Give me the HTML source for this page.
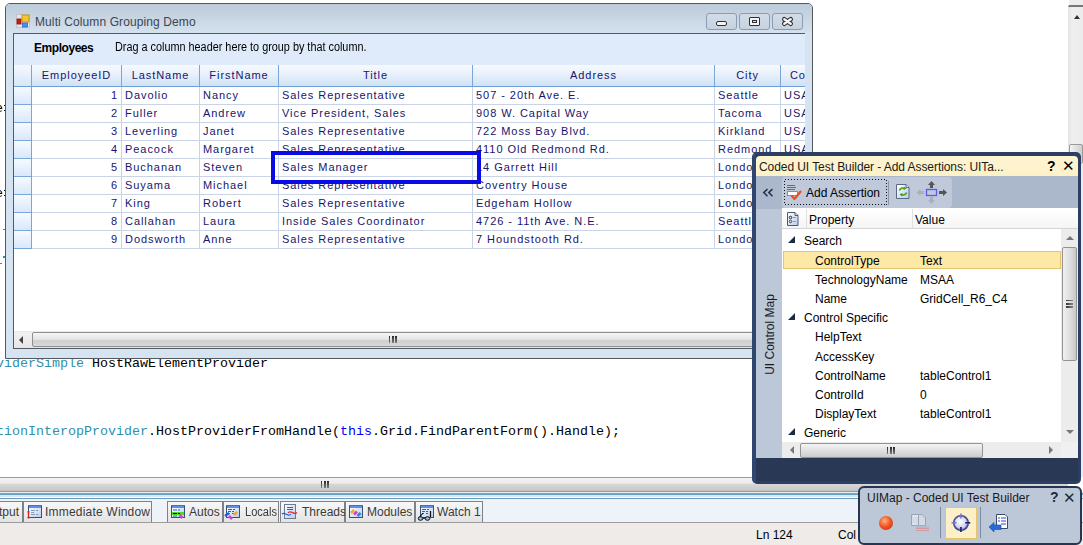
<!DOCTYPE html>
<html><head><meta charset="utf-8">
<style>
*{box-sizing:border-box;margin:0;padding:0}
html,body{width:1083px;height:545px;overflow:hidden;background:#fff;position:relative;font-family:"Liberation Sans",sans-serif}
div,span.a{position:absolute}
.code{font-family:"Liberation Mono",monospace;font-size:13.33px;line-height:17px;white-space:pre;color:#000}
.tl{color:#2b91af;position:static}
.kw{color:#0000ff;position:static}
.gt{font-size:11px;letter-spacing:0.95px;color:#16166e;white-space:nowrap;line-height:17px}
.t12{font-size:12px;white-space:nowrap;line-height:15px}
</style></head>
<body>

<svg width="0" height="0" style="position:absolute"><defs><linearGradient id="wbody" x1="0" y1="0" x2="1" y2="1"><stop offset="0" stop-color="#ffffff"/><stop offset="1" stop-color="#b8cdf0"/></linearGradient><radialGradient id="xh" cx="0.45" cy="0.4" r="0.6"><stop offset="0" stop-color="#ffffff"/><stop offset="1" stop-color="#c0c8ec"/></radialGradient></defs></svg>
<div class="code" style="left:-5px;top:100px">e</div>
<div class="code" style="left:-5px;top:185px">e</div>
<div class="code" style="left:-4px;top:355px"><span class="tl">viderSimple</span> HostRawElementProvider</div>
<div class="code" style="left:-4px;top:423px"><span class="tl">tionInteropProvider</span>.HostProviderFromHandle(<span class="kw">this</span>.Grid.FindParentForm().Handle);</div>
<div style="left:3px;top:229px;width:2px;height:1px;background:#2b91af"></div>
<div style="left:3px;top:256px;width:2px;height:2px;background:#2b91af"></div>
<div style="left:0;top:263px;width:2px;height:1px;background:#2b91af"></div>
<div style="left:4px;top:105px;width:1px;height:1px;background:#000"></div>
<div style="left:4px;top:110px;width:1px;height:1px;background:#000"></div>
<div style="left:4px;top:190px;width:1px;height:1px;background:#000"></div>
<div style="left:4px;top:195px;width:1px;height:1px;background:#000"></div>
<div style="left:1068px;top:0;width:15px;height:477px;background:linear-gradient(90deg,#e3e3e3,#efefef 30%,#ececec)"></div>
<div style="left:1068px;top:0;width:15px;height:7px;background:#eeeeee;border-left:1px solid #fff;border-bottom:2px solid #777"></div>
<div style="left:1074px;top:15px;width:0;height:0;border-left:3.5px solid transparent;border-right:3.5px solid transparent;border-bottom:4px solid #333"></div>
<div style="left:1069px;top:144px;width:14px;height:20px;border:1px solid #9a9a9a;border-radius:2px;background:linear-gradient(90deg,#f4f4f4,#e0e0e0 50%,#cfcfcf)"></div>
<div style="left:5px;top:3px;width:808px;height:356px;border:1px solid #55595e;border-radius:5px 5px 0 0;background:#d6e3f0"></div>
<div style="left:6px;top:4px;width:806px;height:29px;border-radius:4px 4px 0 0;background:linear-gradient(#bccbda,#d5e1ed)"></div>
<svg style="position:absolute;left:14px;top:12px" width="18" height="18" viewBox="14 12 18 18"><rect x="16.5" y="14.5" width="13" height="13" fill="#dde5ee" stroke="#c4c4c4" stroke-width="1"/><rect x="17" y="19" width="4" height="5" fill="#c81e18" stroke="#8a1010" stroke-width="0.8"/><rect x="22" y="15" width="7" height="7" fill="#f6c430" stroke="#c08a00" stroke-width="0.8"/><rect x="22.5" y="23" width="5" height="4" fill="#4a8ef0" stroke="#3068c8" stroke-width="0.8"/></svg>
<div class="t12" style="left:35px;top:15px;color:#3c4650;letter-spacing:0.1px">Multi Column Grouping Demo</div>
<div style="left:706px;top:13px;width:31px;height:17px;border:1px solid #8c9cb4;border-radius:3px;background:linear-gradient(#d2dce8,#c6d2df)"></div>
<div style="left:739px;top:13px;width:31px;height:17px;border:1px solid #8c9cb4;border-radius:3px;background:linear-gradient(#d2dce8,#c6d2df)"></div>
<div style="left:772px;top:13px;width:31px;height:17px;border:1px solid #8c9cb4;border-radius:3px;background:linear-gradient(#d2dce8,#c6d2df)"></div>
<div style="left:716px;top:21px;width:11px;height:5px;border:1px solid #2e2e36;border-radius:2px;background:#f4f4f4"></div>
<div style="left:749px;top:17px;width:11px;height:9px;border:1px solid #2e2e36;border-radius:1px;background:#f4f4f4"></div><div style="left:752px;top:20px;width:5px;height:3px;border:1px solid #2e2e36;background:#d0dceb"></div>
<svg style="position:absolute;left:780px;top:15px" width="15" height="13" viewBox="0 0 15 13"><path d="M4.3 4.3 L10.7 8.7 M10.7 4.3 L4.3 8.7" stroke="#2e3038" stroke-width="4.6" stroke-linecap="round"/><path d="M4.3 4.3 L10.7 8.7 M10.7 4.3 L4.3 8.7" stroke="#f6f6f6" stroke-width="2.4" stroke-linecap="round"/></svg>
<div style="left:13px;top:33px;width:792px;height:316px;border:1px solid #555a60;border-right:none;background:#dfebfb;overflow:hidden">
<div style="left:20px;top:8px;font-size:12px;font-weight:bold;color:#000;white-space:nowrap;line-height:13px;letter-spacing:-0.45px">Employees</div>
<div style="left:101px;top:7px;font-size:12px;color:#000;white-space:nowrap;line-height:13px;transform:scaleX(0.904);transform-origin:0 0">Drag a column header here to group by that column.</div>
<div style="left:0;top:53px;width:800px;height:244px;background:#fff"></div>
<div style="left:0;top:31px;width:18px;height:22px;background:linear-gradient(#f5f9fe,#d7e6f8);border-right:1px solid #7ba6d9;border-bottom:1px solid #6f9fd8"></div>
<div class="gt" style="left:18px;top:31px;width:90px;height:22px;background:linear-gradient(#f6fafe,#e8f0fb 45%,#d0e2f6);border-right:1px solid #7ba6d9;border-bottom:1px solid #6f9fd8;text-align:center;line-height:20px">EmployeeID</div>
<div class="gt" style="left:108px;top:31px;width:78px;height:22px;background:linear-gradient(#f6fafe,#e8f0fb 45%,#d0e2f6);border-right:1px solid #7ba6d9;border-bottom:1px solid #6f9fd8;text-align:center;line-height:20px">LastName</div>
<div class="gt" style="left:186px;top:31px;width:79px;height:22px;background:linear-gradient(#f6fafe,#e8f0fb 45%,#d0e2f6);border-right:1px solid #7ba6d9;border-bottom:1px solid #6f9fd8;text-align:center;line-height:20px">FirstName</div>
<div class="gt" style="left:265px;top:31px;width:194px;height:22px;background:linear-gradient(#f6fafe,#e8f0fb 45%,#d0e2f6);border-right:1px solid #7ba6d9;border-bottom:1px solid #6f9fd8;text-align:center;line-height:20px">Title</div>
<div class="gt" style="left:459px;top:31px;width:242px;height:22px;background:linear-gradient(#f6fafe,#e8f0fb 45%,#d0e2f6);border-right:1px solid #7ba6d9;border-bottom:1px solid #6f9fd8;text-align:center;line-height:20px">Address</div>
<div class="gt" style="left:701px;top:31px;width:66px;height:22px;background:linear-gradient(#f6fafe,#e8f0fb 45%,#d0e2f6);border-right:1px solid #7ba6d9;border-bottom:1px solid #6f9fd8;text-align:center;line-height:20px">City</div>
<div class="gt" style="left:767px;top:31px;width:64px;height:22px;background:linear-gradient(#f6fafe,#e8f0fb 45%,#d0e2f6);border-right:1px solid #7ba6d9;border-bottom:1px solid #6f9fd8;text-align:center;line-height:20px">Country</div>
<div style="left:0;top:53px;width:18px;height:18px;background:linear-gradient(#f6faff,#d9e8fa);border-right:1px solid #7ba6d9;border-bottom:1px solid #7ba6d9"></div>
<div class="gt" style="left:18px;top:53px;width:90px;height:18px;border-right:1px solid #c9d5e7;border-bottom:1px solid #c9d5e7;overflow:hidden;text-align:right;padding-right:3px">1</div>
<div class="gt" style="left:108px;top:53px;width:78px;height:18px;border-right:1px solid #c9d5e7;border-bottom:1px solid #c9d5e7;overflow:hidden;padding-left:3px">Davolio</div>
<div class="gt" style="left:186px;top:53px;width:79px;height:18px;border-right:1px solid #c9d5e7;border-bottom:1px solid #c9d5e7;overflow:hidden;padding-left:3px">Nancy</div>
<div class="gt" style="left:265px;top:53px;width:194px;height:18px;border-right:1px solid #c9d5e7;border-bottom:1px solid #c9d5e7;overflow:hidden;padding-left:3px">Sales Representative</div>
<div class="gt" style="left:459px;top:53px;width:242px;height:18px;border-right:1px solid #c9d5e7;border-bottom:1px solid #c9d5e7;overflow:hidden;padding-left:3px">507 - 20th Ave. E.</div>
<div class="gt" style="left:701px;top:53px;width:66px;height:18px;border-right:1px solid #c9d5e7;border-bottom:1px solid #c9d5e7;overflow:hidden;padding-left:3px">Seattle</div>
<div class="gt" style="left:767px;top:53px;width:64px;height:18px;border-right:1px solid #c9d5e7;border-bottom:1px solid #c9d5e7;overflow:hidden;padding-left:3px">USA</div>
<div style="left:0;top:71px;width:18px;height:18px;background:linear-gradient(#f6faff,#d9e8fa);border-right:1px solid #7ba6d9;border-bottom:1px solid #7ba6d9"></div>
<div class="gt" style="left:18px;top:71px;width:90px;height:18px;border-right:1px solid #c9d5e7;border-bottom:1px solid #c9d5e7;overflow:hidden;text-align:right;padding-right:3px">2</div>
<div class="gt" style="left:108px;top:71px;width:78px;height:18px;border-right:1px solid #c9d5e7;border-bottom:1px solid #c9d5e7;overflow:hidden;padding-left:3px">Fuller</div>
<div class="gt" style="left:186px;top:71px;width:79px;height:18px;border-right:1px solid #c9d5e7;border-bottom:1px solid #c9d5e7;overflow:hidden;padding-left:3px">Andrew</div>
<div class="gt" style="left:265px;top:71px;width:194px;height:18px;border-right:1px solid #c9d5e7;border-bottom:1px solid #c9d5e7;overflow:hidden;padding-left:3px">Vice President, Sales</div>
<div class="gt" style="left:459px;top:71px;width:242px;height:18px;border-right:1px solid #c9d5e7;border-bottom:1px solid #c9d5e7;overflow:hidden;padding-left:3px">908 W. Capital Way</div>
<div class="gt" style="left:701px;top:71px;width:66px;height:18px;border-right:1px solid #c9d5e7;border-bottom:1px solid #c9d5e7;overflow:hidden;padding-left:3px">Tacoma</div>
<div class="gt" style="left:767px;top:71px;width:64px;height:18px;border-right:1px solid #c9d5e7;border-bottom:1px solid #c9d5e7;overflow:hidden;padding-left:3px">USA</div>
<div style="left:0;top:89px;width:18px;height:18px;background:linear-gradient(#f6faff,#d9e8fa);border-right:1px solid #7ba6d9;border-bottom:1px solid #7ba6d9"></div>
<div class="gt" style="left:18px;top:89px;width:90px;height:18px;border-right:1px solid #c9d5e7;border-bottom:1px solid #c9d5e7;overflow:hidden;text-align:right;padding-right:3px">3</div>
<div class="gt" style="left:108px;top:89px;width:78px;height:18px;border-right:1px solid #c9d5e7;border-bottom:1px solid #c9d5e7;overflow:hidden;padding-left:3px">Leverling</div>
<div class="gt" style="left:186px;top:89px;width:79px;height:18px;border-right:1px solid #c9d5e7;border-bottom:1px solid #c9d5e7;overflow:hidden;padding-left:3px">Janet</div>
<div class="gt" style="left:265px;top:89px;width:194px;height:18px;border-right:1px solid #c9d5e7;border-bottom:1px solid #c9d5e7;overflow:hidden;padding-left:3px">Sales Representative</div>
<div class="gt" style="left:459px;top:89px;width:242px;height:18px;border-right:1px solid #c9d5e7;border-bottom:1px solid #c9d5e7;overflow:hidden;padding-left:3px">722 Moss Bay Blvd.</div>
<div class="gt" style="left:701px;top:89px;width:66px;height:18px;border-right:1px solid #c9d5e7;border-bottom:1px solid #c9d5e7;overflow:hidden;padding-left:3px">Kirkland</div>
<div class="gt" style="left:767px;top:89px;width:64px;height:18px;border-right:1px solid #c9d5e7;border-bottom:1px solid #c9d5e7;overflow:hidden;padding-left:3px">USA</div>
<div style="left:0;top:107px;width:18px;height:18px;background:linear-gradient(#f6faff,#d9e8fa);border-right:1px solid #7ba6d9;border-bottom:1px solid #7ba6d9"></div>
<div class="gt" style="left:18px;top:107px;width:90px;height:18px;border-right:1px solid #c9d5e7;border-bottom:1px solid #c9d5e7;overflow:hidden;text-align:right;padding-right:3px">4</div>
<div class="gt" style="left:108px;top:107px;width:78px;height:18px;border-right:1px solid #c9d5e7;border-bottom:1px solid #c9d5e7;overflow:hidden;padding-left:3px">Peacock</div>
<div class="gt" style="left:186px;top:107px;width:79px;height:18px;border-right:1px solid #c9d5e7;border-bottom:1px solid #c9d5e7;overflow:hidden;padding-left:3px">Margaret</div>
<div class="gt" style="left:265px;top:107px;width:194px;height:18px;border-right:1px solid #c9d5e7;border-bottom:1px solid #c9d5e7;overflow:hidden;padding-left:3px">Sales Representative</div>
<div class="gt" style="left:459px;top:107px;width:242px;height:18px;border-right:1px solid #c9d5e7;border-bottom:1px solid #c9d5e7;overflow:hidden;padding-left:3px">4110 Old Redmond Rd.</div>
<div class="gt" style="left:701px;top:107px;width:66px;height:18px;border-right:1px solid #c9d5e7;border-bottom:1px solid #c9d5e7;overflow:hidden;padding-left:3px">Redmond</div>
<div class="gt" style="left:767px;top:107px;width:64px;height:18px;border-right:1px solid #c9d5e7;border-bottom:1px solid #c9d5e7;overflow:hidden;padding-left:3px">USA</div>
<div style="left:0;top:125px;width:18px;height:18px;background:linear-gradient(#f6faff,#d9e8fa);border-right:1px solid #7ba6d9;border-bottom:1px solid #7ba6d9"></div>
<div class="gt" style="left:18px;top:125px;width:90px;height:18px;border-right:1px solid #c9d5e7;border-bottom:1px solid #c9d5e7;overflow:hidden;text-align:right;padding-right:3px">5</div>
<div class="gt" style="left:108px;top:125px;width:78px;height:18px;border-right:1px solid #c9d5e7;border-bottom:1px solid #c9d5e7;overflow:hidden;padding-left:3px">Buchanan</div>
<div class="gt" style="left:186px;top:125px;width:79px;height:18px;border-right:1px solid #c9d5e7;border-bottom:1px solid #c9d5e7;overflow:hidden;padding-left:3px">Steven</div>
<div class="gt" style="left:265px;top:125px;width:194px;height:18px;border-right:1px solid #c9d5e7;border-bottom:1px solid #c9d5e7;overflow:hidden;padding-left:3px">Sales Manager</div>
<div class="gt" style="left:459px;top:125px;width:242px;height:18px;border-right:1px solid #c9d5e7;border-bottom:1px solid #c9d5e7;overflow:hidden;padding-left:3px">14 Garrett Hill</div>
<div class="gt" style="left:701px;top:125px;width:66px;height:18px;border-right:1px solid #c9d5e7;border-bottom:1px solid #c9d5e7;overflow:hidden;padding-left:3px">London</div>
<div class="gt" style="left:767px;top:125px;width:64px;height:18px;border-right:1px solid #c9d5e7;border-bottom:1px solid #c9d5e7;overflow:hidden;padding-left:3px">UK</div>
<div style="left:0;top:143px;width:18px;height:18px;background:linear-gradient(#f6faff,#d9e8fa);border-right:1px solid #7ba6d9;border-bottom:1px solid #7ba6d9"></div>
<div class="gt" style="left:18px;top:143px;width:90px;height:18px;border-right:1px solid #c9d5e7;border-bottom:1px solid #c9d5e7;overflow:hidden;text-align:right;padding-right:3px">6</div>
<div class="gt" style="left:108px;top:143px;width:78px;height:18px;border-right:1px solid #c9d5e7;border-bottom:1px solid #c9d5e7;overflow:hidden;padding-left:3px">Suyama</div>
<div class="gt" style="left:186px;top:143px;width:79px;height:18px;border-right:1px solid #c9d5e7;border-bottom:1px solid #c9d5e7;overflow:hidden;padding-left:3px">Michael</div>
<div class="gt" style="left:265px;top:143px;width:194px;height:18px;border-right:1px solid #c9d5e7;border-bottom:1px solid #c9d5e7;overflow:hidden;padding-left:3px">Sales Representative</div>
<div class="gt" style="left:459px;top:143px;width:242px;height:18px;border-right:1px solid #c9d5e7;border-bottom:1px solid #c9d5e7;overflow:hidden;padding-left:3px">Coventry House</div>
<div class="gt" style="left:701px;top:143px;width:66px;height:18px;border-right:1px solid #c9d5e7;border-bottom:1px solid #c9d5e7;overflow:hidden;padding-left:3px">London</div>
<div class="gt" style="left:767px;top:143px;width:64px;height:18px;border-right:1px solid #c9d5e7;border-bottom:1px solid #c9d5e7;overflow:hidden;padding-left:3px">UK</div>
<div style="left:0;top:161px;width:18px;height:18px;background:linear-gradient(#f6faff,#d9e8fa);border-right:1px solid #7ba6d9;border-bottom:1px solid #7ba6d9"></div>
<div class="gt" style="left:18px;top:161px;width:90px;height:18px;border-right:1px solid #c9d5e7;border-bottom:1px solid #c9d5e7;overflow:hidden;text-align:right;padding-right:3px">7</div>
<div class="gt" style="left:108px;top:161px;width:78px;height:18px;border-right:1px solid #c9d5e7;border-bottom:1px solid #c9d5e7;overflow:hidden;padding-left:3px">King</div>
<div class="gt" style="left:186px;top:161px;width:79px;height:18px;border-right:1px solid #c9d5e7;border-bottom:1px solid #c9d5e7;overflow:hidden;padding-left:3px">Robert</div>
<div class="gt" style="left:265px;top:161px;width:194px;height:18px;border-right:1px solid #c9d5e7;border-bottom:1px solid #c9d5e7;overflow:hidden;padding-left:3px">Sales Representative</div>
<div class="gt" style="left:459px;top:161px;width:242px;height:18px;border-right:1px solid #c9d5e7;border-bottom:1px solid #c9d5e7;overflow:hidden;padding-left:3px">Edgeham Hollow</div>
<div class="gt" style="left:701px;top:161px;width:66px;height:18px;border-right:1px solid #c9d5e7;border-bottom:1px solid #c9d5e7;overflow:hidden;padding-left:3px">London</div>
<div class="gt" style="left:767px;top:161px;width:64px;height:18px;border-right:1px solid #c9d5e7;border-bottom:1px solid #c9d5e7;overflow:hidden;padding-left:3px">UK</div>
<div style="left:0;top:179px;width:18px;height:18px;background:linear-gradient(#f6faff,#d9e8fa);border-right:1px solid #7ba6d9;border-bottom:1px solid #7ba6d9"></div>
<div class="gt" style="left:18px;top:179px;width:90px;height:18px;border-right:1px solid #c9d5e7;border-bottom:1px solid #c9d5e7;overflow:hidden;text-align:right;padding-right:3px">8</div>
<div class="gt" style="left:108px;top:179px;width:78px;height:18px;border-right:1px solid #c9d5e7;border-bottom:1px solid #c9d5e7;overflow:hidden;padding-left:3px">Callahan</div>
<div class="gt" style="left:186px;top:179px;width:79px;height:18px;border-right:1px solid #c9d5e7;border-bottom:1px solid #c9d5e7;overflow:hidden;padding-left:3px">Laura</div>
<div class="gt" style="left:265px;top:179px;width:194px;height:18px;border-right:1px solid #c9d5e7;border-bottom:1px solid #c9d5e7;overflow:hidden;padding-left:3px">Inside Sales Coordinator</div>
<div class="gt" style="left:459px;top:179px;width:242px;height:18px;border-right:1px solid #c9d5e7;border-bottom:1px solid #c9d5e7;overflow:hidden;padding-left:3px">4726 - 11th Ave. N.E.</div>
<div class="gt" style="left:701px;top:179px;width:66px;height:18px;border-right:1px solid #c9d5e7;border-bottom:1px solid #c9d5e7;overflow:hidden;padding-left:3px">Seattle</div>
<div class="gt" style="left:767px;top:179px;width:64px;height:18px;border-right:1px solid #c9d5e7;border-bottom:1px solid #c9d5e7;overflow:hidden;padding-left:3px">USA</div>
<div style="left:0;top:197px;width:18px;height:18px;background:linear-gradient(#f6faff,#d9e8fa);border-right:1px solid #7ba6d9;border-bottom:1px solid #7ba6d9"></div>
<div class="gt" style="left:18px;top:197px;width:90px;height:18px;border-right:1px solid #c9d5e7;border-bottom:1px solid #c9d5e7;overflow:hidden;text-align:right;padding-right:3px">9</div>
<div class="gt" style="left:108px;top:197px;width:78px;height:18px;border-right:1px solid #c9d5e7;border-bottom:1px solid #c9d5e7;overflow:hidden;padding-left:3px">Dodsworth</div>
<div class="gt" style="left:186px;top:197px;width:79px;height:18px;border-right:1px solid #c9d5e7;border-bottom:1px solid #c9d5e7;overflow:hidden;padding-left:3px">Anne</div>
<div class="gt" style="left:265px;top:197px;width:194px;height:18px;border-right:1px solid #c9d5e7;border-bottom:1px solid #c9d5e7;overflow:hidden;padding-left:3px">Sales Representative</div>
<div class="gt" style="left:459px;top:197px;width:242px;height:18px;border-right:1px solid #c9d5e7;border-bottom:1px solid #c9d5e7;overflow:hidden;padding-left:3px">7 Houndstooth Rd.</div>
<div class="gt" style="left:701px;top:197px;width:66px;height:18px;border-right:1px solid #c9d5e7;border-bottom:1px solid #c9d5e7;overflow:hidden;padding-left:3px">London</div>
<div class="gt" style="left:767px;top:197px;width:64px;height:18px;border-right:1px solid #c9d5e7;border-bottom:1px solid #c9d5e7;overflow:hidden;padding-left:3px">UK</div>
<div style="left:0;top:298px;width:800px;height:16px;background:linear-gradient(#f2f2f2,#e6e6e6)"></div>
<div style="left:5px;top:302px;width:0;height:0;border-top:4px solid transparent;border-bottom:4px solid transparent;border-right:4px solid #444"></div>
<div style="left:18px;top:298px;width:760px;height:15px;border:1px solid #8e8f8f;border-radius:2px;background:linear-gradient(#f6f6f6,#e4e4e4 50%,#cfcfcf 55%,#d8d8d8)"></div>
<div style="left:375px;top:302px;width:8px;height:7px;background:repeating-linear-gradient(90deg,#222 0 1.5px,transparent 1.5px 3.1px);-webkit-mask-image:linear-gradient(#000,rgba(0,0,0,0.45))"></div>
</div>
<div style="left:271px;top:151px;width:210px;height:33px;border:4px solid #0a0ae6"></div>
<div style="left:0;top:477px;width:1068px;height:15px;border-top:1px solid #9a9a9a;border-bottom:1px solid #9a9a9a;background:linear-gradient(#f3f3f3,#ececec 40%,#d6d6d6 50%,#cacaca 90%,#c0c0c0)"></div>
<div style="left:321px;top:481px;width:8px;height:7px;background:repeating-linear-gradient(90deg,#222 0 1.5px,transparent 1.5px 3.1px);-webkit-mask-image:linear-gradient(#000,rgba(0,0,0,0.45))"></div>
<div style="left:0;top:492px;width:1083px;height:1px;background:#ececec"></div>
<div style="left:0;top:493px;width:1083px;height:1px;background:#a09a94"></div>
<div style="left:0;top:494px;width:1083px;height:1px;background:#6aa0c0"></div>
<div style="left:0;top:495px;width:1083px;height:2px;background:#d8e8f8"></div>
<div style="left:0;top:497px;width:1083px;height:1px;background:#ffffff"></div>
<div style="left:0;top:498px;width:1083px;height:1px;background:#6a9cc0"></div>
<div style="left:0;top:499px;width:1083px;height:23px;background:#eef3fa"></div>
<div style="left:-40px;top:501px;width:63px;height:22px;border:1px solid #7e8288;border-bottom:none;background:linear-gradient(#f8f8f8,#ebebeb 60%,#e2e2e2)"></div>
<div class="t12" style="left:-1px;top:505px;color:#3a3a3a">tput</div>
<div style="left:23px;top:501px;width:129px;height:22px;border:1px solid #7e8288;border-bottom:none;background:linear-gradient(#f8f8f8,#ebebeb 60%,#e2e2e2)"></div>
<svg style="position:absolute;left:24px;top:503px" width="22" height="18" viewBox="24 503 22 18"><rect x="28.5" y="505.5" width="13" height="12" fill="url(#wbody)" stroke="#34527a" stroke-width="1"/><rect x="29" y="506" width="12" height="2" fill="#5c8fe6"/><rect x="28" y="505" width="14" height="1" fill="#3f6fd0"/><path d="M31 510.5h4 M36 510.5h2 M31 512.5h3 M31 514.5h4 M36 514.5h2" stroke="#8a9ab0" stroke-width="1"/><path d="M27.5 511 L29.5 511 L29 516 L28 516Z" fill="#e02010"/><rect x="27.5" y="516.5" width="2" height="2" fill="#e02010"/></svg>
<div class="t12" style="left:45px;top:505px;color:#3a3a3a;letter-spacing:0.2px;">Immediate Window</div>
<div style="left:167px;top:501px;width:56px;height:22px;border:1px solid #7e8288;border-bottom:none;background:linear-gradient(#f8f8f8,#ebebeb 60%,#e2e2e2)"></div>
<svg style="position:absolute;left:169px;top:503px" width="20" height="18" viewBox="169 503 20 18"><rect x="171.5" y="505.5" width="13" height="12" fill="url(#wbody)" stroke="#34527a" stroke-width="1"/><rect x="172" y="506" width="12" height="2" fill="#5c8fe6"/><rect x="171" y="505" width="14" height="1" fill="#3f6fd0"/><rect x="172" y="512" width="12" height="3" fill="#4ee01a"/><path d="M173 510h4 M178 510h2 M173 513.5h4 M178 513.5h2 M173 516h4" stroke="#2a5ad8" stroke-width="1"/><path d="M173 513.5h4 M178 513.5h2" stroke="#000" stroke-width="1.2"/><path d="M179.5 515 L182.5 518" stroke="#d040d0" stroke-width="2.6"/></svg>
<div class="t12" style="left:189px;top:505px;color:#3a3a3a;">Autos</div>
<div style="left:223px;top:501px;width:56px;height:22px;border:1px solid #7e8288;border-bottom:none;background:linear-gradient(#f8f8f8,#ebebeb 60%,#e2e2e2)"></div>
<svg style="position:absolute;left:223px;top:503px" width="20" height="20" viewBox="223 503 20 20"><rect x="226.5" y="505.5" width="13" height="12" fill="url(#wbody)" stroke="#34527a" stroke-width="1"/><rect x="227" y="506" width="12" height="2" fill="#5c8fe6"/><rect x="226" y="505" width="14" height="1" fill="#3f6fd0"/><path d="M228 509.5h4 M233 509.5h2 M228 511.5h3 M232 511.5h2 M229 513.5h1 M232 513.5h2" stroke="#2a5ad8" stroke-width="1"/><path d="M225 516 L229 513" stroke="#2060d0" stroke-width="2.6"/><path d="M234 515 L237 512" stroke="#e8b020" stroke-width="2.6"/><path d="M229 516 L232 519" stroke="#d040d0" stroke-width="2.6"/></svg>
<div class="t12" style="left:245px;top:505px;color:#3a3a3a;transform:scaleX(0.92);transform-origin:0 0;">Locals</div>
<div style="left:280px;top:501px;width:65px;height:22px;border:1px solid #7e8288;border-bottom:none;background:linear-gradient(#f8f8f8,#ebebeb 60%,#e2e2e2)"></div>
<svg style="position:absolute;left:281px;top:503px" width="18" height="18" viewBox="281 503 18 18"><rect x="284.5" y="504.5" width="11" height="14" fill="url(#wbody)" stroke="#6a7c94" stroke-width="1"/><path d="M287 507.5h6 M287 509.5h6" stroke="#2a5ad8" stroke-width="1"/><path d="M282 514 C285 511 288 518 291 514" stroke="#2a5ad8" stroke-width="1.2" fill="none"/><path d="M288 513 C291 509 294 516 297 512.5" stroke="#e03030" stroke-width="1.2" fill="none"/></svg>
<div class="t12" style="left:302px;top:505px;color:#3a3a3a;">Threads</div>
<div style="left:345px;top:501px;width:70px;height:22px;border:1px solid #7e8288;border-bottom:none;background:linear-gradient(#f8f8f8,#ebebeb 60%,#e2e2e2)"></div>
<svg style="position:absolute;left:347px;top:503px" width="18" height="18" viewBox="347 503 18 18"><rect x="349.5" y="505.5" width="13" height="12" fill="url(#wbody)" stroke="#34527a" stroke-width="1"/><rect x="350" y="506" width="12" height="2" fill="#5c8fe6"/><rect x="349" y="505" width="14" height="1" fill="#3f6fd0"/><path d="M351 513 L354 510" stroke="#e8b020" stroke-width="2.6"/><path d="M354 514.5 L357 511.5" stroke="#d040d0" stroke-width="2.6"/><path d="M357.5 516 L360.5 513" stroke="#3a80e0" stroke-width="2.6"/></svg>
<div class="t12" style="left:367px;top:505px;color:#3a3a3a;">Modules</div>
<div style="left:415px;top:501px;width:68px;height:22px;border:1px solid #7e8288;border-bottom:none;background:linear-gradient(#f8f8f8,#ebebeb 60%,#e2e2e2)"></div>
<svg style="position:absolute;left:416px;top:503px" width="20" height="20" viewBox="416 503 20 20"><rect x="420.5" y="505.5" width="13" height="12" fill="url(#wbody)" stroke="#34527a" stroke-width="1"/><rect x="421" y="506" width="12" height="2" fill="#5c8fe6"/><rect x="420" y="505" width="14" height="1" fill="#3f6fd0"/><path d="M422 509.5h4 M427 509.5h2 M422 511.5h3 M426 511.5h2 M423 513.5h1 M426 513.5h2" stroke="#2a5ad8" stroke-width="1"/><path d="M419 518 L423 513 M430.5 517 L430.5 511" stroke="#111" stroke-width="1.2"/><ellipse cx="420.5" cy="518.5" rx="2.3" ry="1.8" fill="#8fc0f8" stroke="#111" stroke-width="1"/><ellipse cx="427.5" cy="518.5" rx="2.3" ry="1.8" fill="#8fc0f8" stroke="#111" stroke-width="1"/><path d="M422.8 518.3h2.4" stroke="#111" stroke-width="1"/></svg>
<div class="t12" style="left:437px;top:505px;color:#3a3a3a;">Watch 1</div>
<div style="left:0;top:522px;width:1083px;height:23px;background:#efebe9;border-top:1px solid #9d9d9d"></div>
<div class="t12" style="left:756px;top:528px;color:#000">Ln 124</div>
<div class="t12" style="left:838px;top:528px;color:#000">Col</div>
<div style="left:752px;top:152px;width:329px;height:332px;border:3px solid #2c3f62;border-top-width:4px;border-left:4px solid #2f4670;border-radius:5px;background:#293955"></div>
<div style="left:756px;top:156px;width:322px;height:20px;border-radius:4px 4px 0 0;background:linear-gradient(#fdf5d2,#fdf1c8)"></div>
<div class="t12" style="left:759px;top:160px;color:#1a1a1a;letter-spacing:-0.07px">Coded UI Test Builder - Add Assertions: UITa...</div>
<div style="left:1047px;top:158px;font:bold 14px/16px 'Liberation Sans';color:#000">?</div>
<div style="left:1062px;top:157px;font:15px/17px 'Liberation Sans';color:#000">&#x2715;</div>
<div style="left:756px;top:176px;width:322px;height:33px;background:#abb7cb"></div>
<div style="left:756px;top:209px;width:26px;height:249px;background:#bcc7d8"></div>
<div style="left:782px;top:177px;width:170px;height:31px;border-radius:3px 4px 4px 3px;background:#bfc9da"></div>
<svg style="position:absolute;left:760px;top:185px" width="16" height="15" viewBox="760 185 16 15"><path d="M767.5 189 L763.8 192.6 L767.5 196.2 M772.5 189 L768.8 192.6 L772.5 196.2" stroke="#253553" stroke-width="1.6" fill="none"/></svg>
<svg style="position:absolute;left:782px;top:177px" width="108" height="30" viewBox="782 177 108 30"><rect x="784.5" y="179.5" width="102" height="25" fill="none" stroke="#111" stroke-width="1" stroke-dasharray="1 2" shape-rendering="crispEdges"/></svg>
<div class="t12" style="left:806px;top:186px;color:#000">Add Assertion</div>
<div style="left:888px;top:181px;width:1px;height:24px;background:#8a96ac"></div>
<div style="left:782px;top:208px;width:296px;height:250px;background:#fff"></div>
<div style="left:782px;top:209px;width:296px;height:20px;background:linear-gradient(#ffffff,#f5f5f5);border-bottom:1px solid #d5d5d5"></div>
<div style="left:806px;top:209px;width:1px;height:20px;background:#e0e0e0"></div>
<div style="left:912px;top:209px;width:1px;height:20px;background:#e0e0e0"></div>
<div class="t12" style="left:809px;top:213px;color:#000">Property</div>
<div class="t12" style="left:915px;top:213px;color:#000">Value</div>
<div style="left:788px;top:236.4px;width:0;height:0;border-left:7px solid transparent;border-bottom:7px solid #1c2a44"></div>
<div class="t12" style="left:804px;top:234.4px;color:#000">Search</div>
<div style="left:783px;top:251px;width:278px;height:18px;background:#fde8a6;border:1px solid #e6c46a"></div>
<div class="t12" style="left:815px;top:253.6px;color:#000">ControlType</div>
<div class="t12" style="left:920px;top:253.6px;color:#000">Text</div>
<div class="t12" style="left:815px;top:272.8px;color:#000">TechnologyName</div>
<div class="t12" style="left:920px;top:272.8px;color:#000">MSAA</div>
<div class="t12" style="left:815px;top:292.0px;color:#000">Name</div>
<div class="t12" style="left:920px;top:292.0px;color:#000">GridCell_R6_C4</div>
<div style="left:788px;top:313.2px;width:0;height:0;border-left:7px solid transparent;border-bottom:7px solid #1c2a44"></div>
<div class="t12" style="left:804px;top:311.2px;color:#000">Control Specific</div>
<div class="t12" style="left:815px;top:330.4px;color:#000">HelpText</div>
<div class="t12" style="left:920px;top:330.4px;color:#000"></div>
<div class="t12" style="left:815px;top:349.6px;color:#000">AccessKey</div>
<div class="t12" style="left:920px;top:349.6px;color:#000"></div>
<div class="t12" style="left:815px;top:368.8px;color:#000">ControlName</div>
<div class="t12" style="left:920px;top:368.8px;color:#000">tableControl1</div>
<div class="t12" style="left:815px;top:388.0px;color:#000">ControlId</div>
<div class="t12" style="left:920px;top:388.0px;color:#000">0</div>
<div class="t12" style="left:815px;top:407.2px;color:#000">DisplayText</div>
<div class="t12" style="left:920px;top:407.2px;color:#000">tableControl1</div>
<div style="left:788px;top:428.4px;width:0;height:0;border-left:7px solid transparent;border-bottom:7px solid #1c2a44"></div>
<div class="t12" style="left:804px;top:426.4px;color:#000">Generic</div>
<div style="left:1061px;top:229px;width:17px;height:213px;background:#ececec"></div>
<div style="left:1062px;top:247px;width:15px;height:114px;border:1px solid #939393;border-radius:2px;background:linear-gradient(90deg,#f0f0f0,#dcdcdc 60%,#c8c8c8)"></div>
<div style="left:1066px;top:236px;width:0;height:0;border-left:4px solid transparent;border-right:4px solid transparent;border-bottom:4px solid #777"></div>
<div style="left:1066px;top:430px;width:0;height:0;border-left:4px solid transparent;border-right:4px solid transparent;border-top:4px solid #777"></div>
<div style="left:782px;top:442px;width:296px;height:16px;background:#ececec"></div>
<div style="left:800px;top:443px;width:183px;height:15px;border:1px solid #939393;border-radius:2px;background:linear-gradient(#f4f4f4,#dedede 55%,#cdcdcd)"></div>
<div style="left:790px;top:446px;width:0;height:0;border-top:4px solid transparent;border-bottom:4px solid transparent;border-right:4px solid #777"></div>
<div style="left:1049px;top:446px;width:0;height:0;border-top:4px solid transparent;border-bottom:4px solid transparent;border-left:4px solid #777"></div>
<div style="left:1061px;top:442px;width:17px;height:16px;background:#f0f0f0"></div>
<div style="left:887px;top:447px;width:8px;height:7px;background:repeating-linear-gradient(90deg,#222 0 1.5px,transparent 1.5px 3.1px);-webkit-mask-image:linear-gradient(#000,rgba(0,0,0,0.5))"></div>
<div style="left:1066px;top:299.5px;width:7px;height:8px;background:repeating-linear-gradient(180deg,#333 0 1.5px,transparent 1.5px 3.2px);-webkit-mask-image:linear-gradient(90deg,#000,rgba(0,0,0,0.5))"></div>
<div class="t12" style="left:730px;top:325px;width:81px;transform:rotate(-90deg);transform-origin:center;color:#1a1a1a;text-align:center;left:730px;top:327px">UI Control Map</div>
<div style="left:858px;top:486px;width:224px;height:59px;border:2px solid #253552;border-radius:6px;background:#bcc7d8"></div>
<div class="t12" style="left:867px;top:491px;color:#1a1a1a">UIMap - Coded UI Test Builder</div>
<div style="left:1050px;top:489px;font:bold 14px/16px 'Liberation Sans';color:#1a2a40">?</div>
<div style="left:1063px;top:490px;font:15px/16px 'Liberation Sans';color:#1a2a40">&#x2715;</div>
<div style="left:879px;top:516px;width:14px;height:14px;border-radius:50%;background:radial-gradient(circle at 40% 35%,#ffb080,#f05020 50%,#c03010)"></div>
<div style="left:940px;top:507px;width:1px;height:31px;background:#7d8aa0"></div>
<div style="left:945px;top:507px;width:32px;height:32px;background:#fdf0c6;border:1px solid #e3c36b"></div>
<div style="left:953px;top:515px;width:16px;height:16px;border:2px solid #2f3f8f;border-radius:50%;background:radial-gradient(#fff,#c8d0f0)"></div>
<div style="left:980px;top:507px;width:1px;height:31px;background:#7d8aa0"></div>
<svg style="position:absolute;left:784px;top:182px" width="20" height="20" viewBox="784 182 20 20"><path d="M787 185.5h8 M787 187.5h9 M787 189.5h8" stroke="#3a6ee0" stroke-width="1.2"/><rect x="787.5" y="191.5" width="10" height="4" fill="#fff" stroke="#7890b0" stroke-width="1"/><path d="M791.5 195.5 L794.5 199 L801 191" stroke="#e85020" stroke-width="2.2" fill="none" stroke-linejoin="round"/></svg>
<svg style="position:absolute;left:894px;top:182px" width="18" height="20" viewBox="894 182 18 20"><path d="M896.5 184.5 H906 L909 187.5 V198.5 H896.5 Z" fill="url(#wbody)" stroke="#5a6a84" stroke-width="1"/><path d="M906 184.5 V187.5 H909" fill="#dfe6f0" stroke="#5a6a84" stroke-width="1"/><path d="M899.5 190.5 C900 188 903 187.5 905 188.5" stroke="#4aa010" stroke-width="1.6" fill="none"/><path d="M904 186.5 L906.5 188.8 L903.5 190" fill="#4aa010"/><path d="M906.5 192.5 C906 195 903 195.5 901 194.5" stroke="#4aa010" stroke-width="1.6" fill="none"/><path d="M902 196.5 L899.5 194.2 L902.5 193" fill="#4aa010"/></svg>
<svg style="position:absolute;left:914px;top:179px" width="36" height="28" viewBox="914 179 36 28"><rect x="926.5" y="189.5" width="10" height="6" fill="none" stroke="#5a5af0" stroke-width="1.3"/><path d="M931.5 181 L935 185 H933 V188 H930 V185 H928 Z" fill="#555"/><path d="M947 192.5 L943 196 V194 H939 V191 H943 V189 Z" fill="#555"/><path d="M916.5 192.5 L920.5 189 V191 H924 V194 H920.5 V196 Z" fill="#a8b0bc"/><path d="M931.5 204 L928 200 H930 V197 H933 V200 H935 Z" fill="#a8b0bc"/></svg>
<svg style="position:absolute;left:785px;top:210px" width="16" height="18" viewBox="785 210 16 18"><path d="M787.5 212.5 H795 L798 215.5 V225.5 H787.5 Z" fill="url(#wbody)" stroke="#4a5a74" stroke-width="1"/><path d="M795 212.5 V215.5 H798" fill="#dfe6f0" stroke="#4a5a74" stroke-width="1"/><circle cx="790.5" cy="217.5" r="1.3" fill="none" stroke="#222" stroke-width="1"/><circle cx="790.5" cy="221.5" r="1.3" fill="none" stroke="#444" stroke-width="1"/><path d="M793 217.5h3 M793 221.5h3" stroke="#999" stroke-width="1"/></svg>
<svg style="position:absolute;left:909px;top:512px" width="22" height="21" viewBox="909 512 22 21"><path d="M911.5 514.5 H922 L925.5 518 V525.5 H911.5 Z" fill="#d4dbe6" stroke="#9aa4b4" stroke-width="1"/><path d="M918.5 515 V525" stroke="#9aa4b4" stroke-width="1"/><path d="M913 516h1 M915 516h1 M917 516h1 M913 524h1 M915 524h1" stroke="#fff" stroke-width="1"/><path d="M917 525.5h8 M916 528.5h13 M916 530.5h13" stroke="#d09aa0" stroke-width="1"/><path d="M916 527h13" stroke="#a0b0c8" stroke-width="1"/></svg>
<svg style="position:absolute;left:948px;top:510px" width="26" height="26" viewBox="948 510 26 26"><circle cx="960.9" cy="522.8" r="6.6" fill="url(#xh)" stroke="#6a6ab0" stroke-width="1"/><path d="M960.9 513.5 V518.5 M960.9 527 V532 M951.5 522.8 H956.5 M965.3 522.8 H970.2" stroke="#7a7ad0" stroke-width="1.6"/><path d="M960.9 527 V532 M965.3 522.8 H970.2" stroke="#22226a" stroke-width="1.6"/></svg>
<svg style="position:absolute;left:986px;top:512px" width="24" height="22" viewBox="986 512 24 22"><path d="M996.5 514.5 H1005 L1007.5 517 V528.5 H996.5 Z" fill="#fff" stroke="#3a4a64" stroke-width="1"/><path d="M998 518h2 M1001 518h5 M998 521h2 M1001 521h5 M1001 524h5" stroke="#2a4ad0" stroke-width="1.2"/><path d="M989 527 L994 522.5 V525 H1001 V529.5 H994 V532 Z" fill="#2a6ad8" stroke="#1a4aa8" stroke-width="0.6"/></svg>
</body></html>
